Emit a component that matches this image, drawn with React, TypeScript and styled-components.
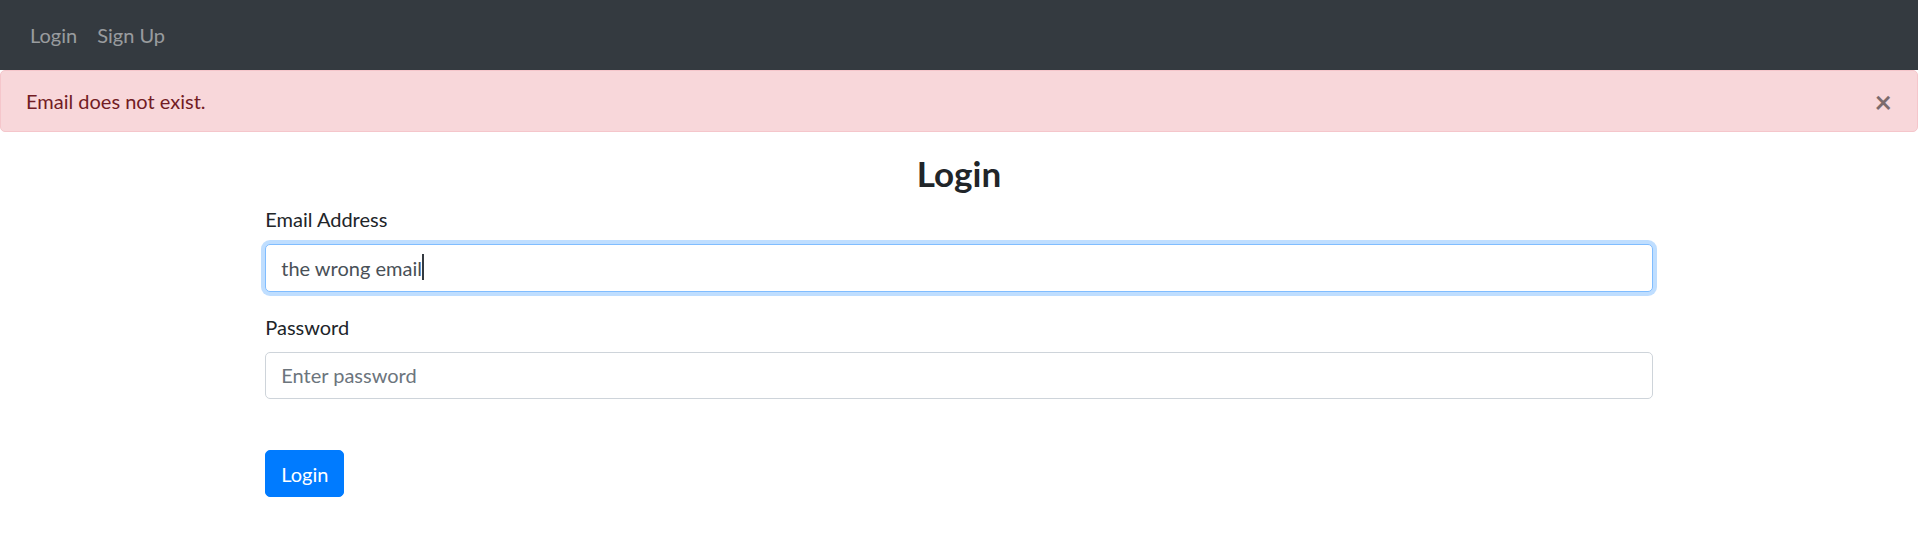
import React, { useEffect, useRef, useState } from "react";
import styled, { createGlobalStyle, css } from "styled-components";

const GlobalStyle = createGlobalStyle`
  * {
    box-sizing: border-box;
  }
  body {
    margin: 0;
    font-family: "Lato", "Noto Sans", sans-serif;
    font-size: 20px;
    line-height: 30px;
    color: #212529;
    background: #ffffff;
  }
`;

const Navbar = styled.nav`
  display: flex;
  align-items: center;
  height: 70px;
  padding: 10px 20px;
  background: #343a40;
`;

const NavLink = styled.a`
  padding: 10px;
  color: rgba(255, 255, 255, 0.5);
  text-decoration: none;
  font-size: 20px;
  line-height: 30px;
  cursor: pointer;
`;

const Alert = styled.div`
  position: relative;
  padding: 15px 25px;
  margin-bottom: 20px;
  border: 1px solid #f5c6cb;
  border-radius: 5px;
  background: #f8d7da;
  color: #721c24;
`;

const CloseButton = styled.button`
  position: absolute;
  top: 0;
  right: 0;
  padding: 15px 25px;
  border: 0;
  background: transparent;
  font-family: inherit;
  font-size: 30px;
  font-weight: 700;
  line-height: 1;
  color: #000000;
  opacity: 0.5;
  cursor: pointer;
`;

const Container = styled.div`
  max-width: 1425px;
  margin: 0 auto;
  padding: 0 18.75px;
`;

const Title = styled.h3`
  margin: 0 0 10px;
  font-size: 35px;
  line-height: 42px;
  font-weight: 700;
  text-align: center;
`;

const FormGroup = styled.div`
  margin-bottom: 20px;
`;

const Label = styled.label`
  display: inline-block;
  margin-bottom: 10px;
`;

const InputWrap = styled.div`
  position: relative;
`;

const Caret = styled.span`
  position: absolute;
  top: 10px;
  width: 2px;
  height: 26px;
  background: #343a40;
  pointer-events: none;
`;

const Input = styled.input<{ $focused?: boolean }>`
  display: block;
  width: 100%;
  height: 47.5px;
  padding: 7.5px 15px;
  font-family: inherit;
  font-size: 20px;
  line-height: 30px;
  color: #495057;
  caret-color: transparent;
  background: #ffffff;
  border: 1px solid #ced4da;
  border-radius: 5px;
  outline: none;

  &::placeholder {
    color: #6c757d;
  }

  ${({ $focused }) =>
    $focused &&
    css`
      border-color: #80bdff;
      box-shadow: 0 0 0 4px rgba(0, 123, 255, 0.25);
    `}
`;

const SubmitButton = styled.button`
  margin-top: 31px;
  padding: 7.5px 15px;
  font-family: inherit;
  font-size: 20px;
  line-height: 30px;
  color: #ffffff;
  background: #007bff;
  border: 1px solid #007bff;
  border-radius: 5px;
  cursor: pointer;
`;

// width of the typed text, so the fake caret sits right after it
const measureText = (text: string) => {
  const canvas = document.createElement("canvas");
  const ctx = canvas.getContext("2d");
  if (!ctx) return 0;
  ctx.font = '20px "Lato", "Noto Sans", sans-serif';
  return ctx.measureText(text).width;
};

export default function App() {
  const [email, setEmail] = useState<string>("the wrong email");
  const [password, setPassword] = useState<string>("");
  const [showAlert, setShowAlert] = useState<boolean>(true);
  const [caretLeft, setCaretLeft] = useState<number>(0);
  const emailRef = useRef<HTMLInputElement>(null);

  useEffect(() => {
    const update = () => setCaretLeft(16 + measureText(email));
    update();
    document.fonts?.ready.then(update);
  }, [email]);

  return (
    <>
      <GlobalStyle />
      <Navbar>
        <NavLink>Login</NavLink>
        <NavLink>Sign Up</NavLink>
      </Navbar>
      {showAlert && (
        <Alert>
          Email does not exist.
          <CloseButton onClick={() => setShowAlert(false)}>×</CloseButton>
        </Alert>
      )}
      <Container>
        <Title>Login</Title>
        <form onSubmit={(e) => e.preventDefault()}>
          <FormGroup>
            <Label>Email Address</Label>
            <InputWrap>
              <Input
                ref={emailRef}
                $focused
                type="text"
                value={email}
                onChange={(e) => setEmail(e.target.value)}
              />
              {caretLeft > 0 && <Caret style={{ left: caretLeft }} />}
            </InputWrap>
          </FormGroup>
          <FormGroup>
            <Label>Password</Label>
            <Input
              type="password"
              placeholder="Enter password"
              value={password}
              onChange={(e) => setPassword(e.target.value)}
            />
          </FormGroup>
          <SubmitButton type="submit">Login</SubmitButton>
        </form>
      </Container>
    </>
  );
}
